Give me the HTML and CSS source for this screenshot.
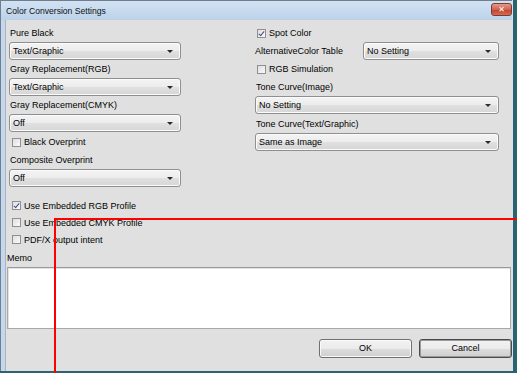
FILE: index.html
```html
<!DOCTYPE html>
<html lang="en">
<head>
    <meta charset="UTF-8">
    <title>Color Conversion Settings</title>
    <link rel="stylesheet" href="styles.css">
</head>
<body>
    <div class="window">
        <div class="titlebar">
            <span class="title">Color Conversion Settings</span>
            <span class="close">&#10005;</span>
        </div>
        <div class="content">
            <div class="columns">
                <div class="col-left">
                    <div class="label">Pure Black</div>
                    <div class="select"><span>Text/Graphic</span><i class="arrow"></i></div>
                    <div class="label">Gray Replacement(RGB)</div>
                    <div class="select"><span>Text/Graphic</span><i class="arrow"></i></div>
                    <div class="label">Gray Replacement(CMYK)</div>
                    <div class="select"><span>Off</span><i class="arrow"></i></div>
                    <div class="check check-sub"><i class="box"></i>Black Overprint</div>
                    <div class="label label-gap">Composite Overprint</div>
                    <div class="select"><span>Off</span><i class="arrow"></i></div>
                </div>
                <div class="col-right">
                    <div class="check check-right"><i class="box checked"></i>Spot Color</div>
                    <div class="alt-row">
                        <span class="alt-label">AlternativeColor Table</span>
                        <div class="select alt-select"><span>No Setting</span><i class="arrow"></i></div>
                    </div>
                    <div class="check check-right"><i class="box"></i>RGB Simulation</div>
                    <div class="label label-gap">Tone Curve(Image)</div>
                    <div class="select"><span>No Setting</span><i class="arrow"></i></div>
                    <div class="label label-gap">Tone Curve(Text/Graphic)</div>
                    <div class="select"><span>Same as Image</span><i class="arrow"></i></div>
                </div>
            </div>

            <div class="profiles">
                <div class="check check-row"><i class="box checked"></i>Use Embedded RGB Profile</div>
                <div class="check check-row"><i class="box"></i>Use Embedded CMYK Profile</div>
                <div class="check check-row"><i class="box"></i>PDF/X output intent</div>
            </div>

            <div class="memo-label">Memo</div>
            <div class="memo"></div>

            <div class="buttons">
                <div class="btn">OK</div>
                <div class="btn btn-focus">Cancel</div>
            </div>
        </div>
    </div>

    <div class="marker-h"></div>
    <div class="marker-v"></div>
</body>
</html>
```

FILE: styles.css
```css
body {
    margin: 0;
    width: 517px;
    height: 373px;
    overflow: hidden;
    background: #2b6470;
    font-family: "Liberation Sans Narrow", "Liberation Sans", Arial, sans-serif;
    font-size: 9px;
    color: #000;
}
.window {
    width: 513px;
    height: 371px;
    box-sizing: border-box;
    border-left: 1px solid #6f7f8e;
    border-right: 1px solid #d6e3ef;
    background: #c4d7ec;
    padding-left: 4px;
    display: flex;
    flex-direction: column;
}
.titlebar {
    height: 20px;
    margin-left: -4px;
    padding-left: 4px;
    border-top: 1px solid #6f7f8e;
    box-sizing: border-box;
    background: linear-gradient(#d2e2f3, #bcd2ea);
    display: flex;
    align-items: center;
    position: relative;
}
.title {
    font-size: 8.6px;
    color: #111;
    padding-left: 1px;
}
.close {
    position: absolute;
    right: 0px;
    top: 2px;
    width: 21px;
    height: 13px;
    box-sizing: border-box;
    border: 1px solid #7b3a33;
    border-radius: 3px;
    background: linear-gradient(#e59a8c, #d0624f 50%, #c0412c 51%, #d56a4e);
    color: #fff;
    font-size: 8px;
    font-weight: bold;
    line-height: 11px;
    text-align: center;
    font-family: "DejaVu Sans", sans-serif;
}
.content {
    flex: 1;
    background: #e0e0e0;
    border-left: 1px solid #a9b6c2;
    padding-top: 5px;
}
.columns {
    display: flex;
    padding-left: 3px;
}
.col-left {
    width: 172px;
}
.col-right {
    width: 244px;
    margin-left: 74px;
}
.label {
    height: 16px;
    line-height: 16px;
    padding-left: 1px;
    margin-bottom: 1px;
}
.label-gap {
    margin-top: 2px;
}
.col-left .select + .label {
    margin-top: 1px;
}
.select {
    height: 18px;
    box-sizing: border-box;
    border: 1px solid #8e8f8f;
    border-radius: 3px;
    background: linear-gradient(#f4f4f4, #ececec 50%, #e0e0e0 51%, #d6d6d6);
    box-shadow: inset 0 0 0 1px #fbfbfb;
    display: flex;
    align-items: center;
    padding-left: 3px;
    position: relative;
}
.select span {
    flex: 1;
}
.arrow {
    width: 0;
    height: 0;
    border-left: 3px solid transparent;
    border-right: 3px solid transparent;
    border-top: 3px solid #2a2a2a;
    margin-right: 7px;
}
.check {
    display: flex;
    align-items: center;
    height: 16px;
}
.box {
    width: 9px;
    height: 9px;
    box-sizing: border-box;
    border: 1px solid #8f8f8f;
    background: linear-gradient(135deg, #dedede, #fbfbfb);
    margin-right: 3px;
    position: relative;
}
.box.checked::after {
    content: "";
    position: absolute;
    left: 2px;
    top: 0px;
    width: 2px;
    height: 5px;
    border-right: 1px solid #3d4f8a;
    border-bottom: 1px solid #3d4f8a;
    transform: rotate(40deg);
}
.check-sub {
    margin-top: 2px;
    padding-left: 3px;
}
.check-right {
    padding-left: 2px;
}
.alt-row {
    display: flex;
    align-items: center;
    margin-top: 1px;
    margin-bottom: 1px;
}
.alt-label {
    width: 108px;
}
.alt-select {
    flex: 1;
}
.profiles {
    margin-top: 10px;
    padding-left: 6px;
}
.check-row {
    height: 17px;
}
.memo-label {
    margin-top: 2px;
    height: 16px;
    line-height: 16px;
    padding-left: 1px;
}
.memo {
    margin: 1px 1px 0 1px;
    height: 62px;
    box-sizing: border-box;
    background: #fff;
    border: 1px solid #a8a8a8;
    border-top-color: #9a9a9a;
    box-shadow: inset 1px 1px 0 #e3e3e3;
}
.buttons {
    display: flex;
    justify-content: flex-end;
    gap: 7px;
    margin-top: 10px;
}
.btn {
    width: 93px;
    height: 19px;
    box-sizing: border-box;
    border: 1px solid #707070;
    border-radius: 3px;
    background: linear-gradient(#f2f2f2, #ebebeb 50%, #dddddd 51%, #cfcfcf);
    box-shadow: inset 0 0 0 1px #fafafa;
    text-align: center;
    line-height: 17px;
}
.btn-focus {
    border-color: #4a4a4a;
    box-shadow: inset 0 0 0 1px #9a9a9a;
}
.marker-h {
    position: absolute;
    left: 54px;
    top: 218px;
    width: 463px;
    height: 2px;
    background: #ff0000;
}
.marker-v {
    position: absolute;
    left: 54px;
    top: 218px;
    width: 2px;
    height: 155px;
    background: #ff0000;
}
```
